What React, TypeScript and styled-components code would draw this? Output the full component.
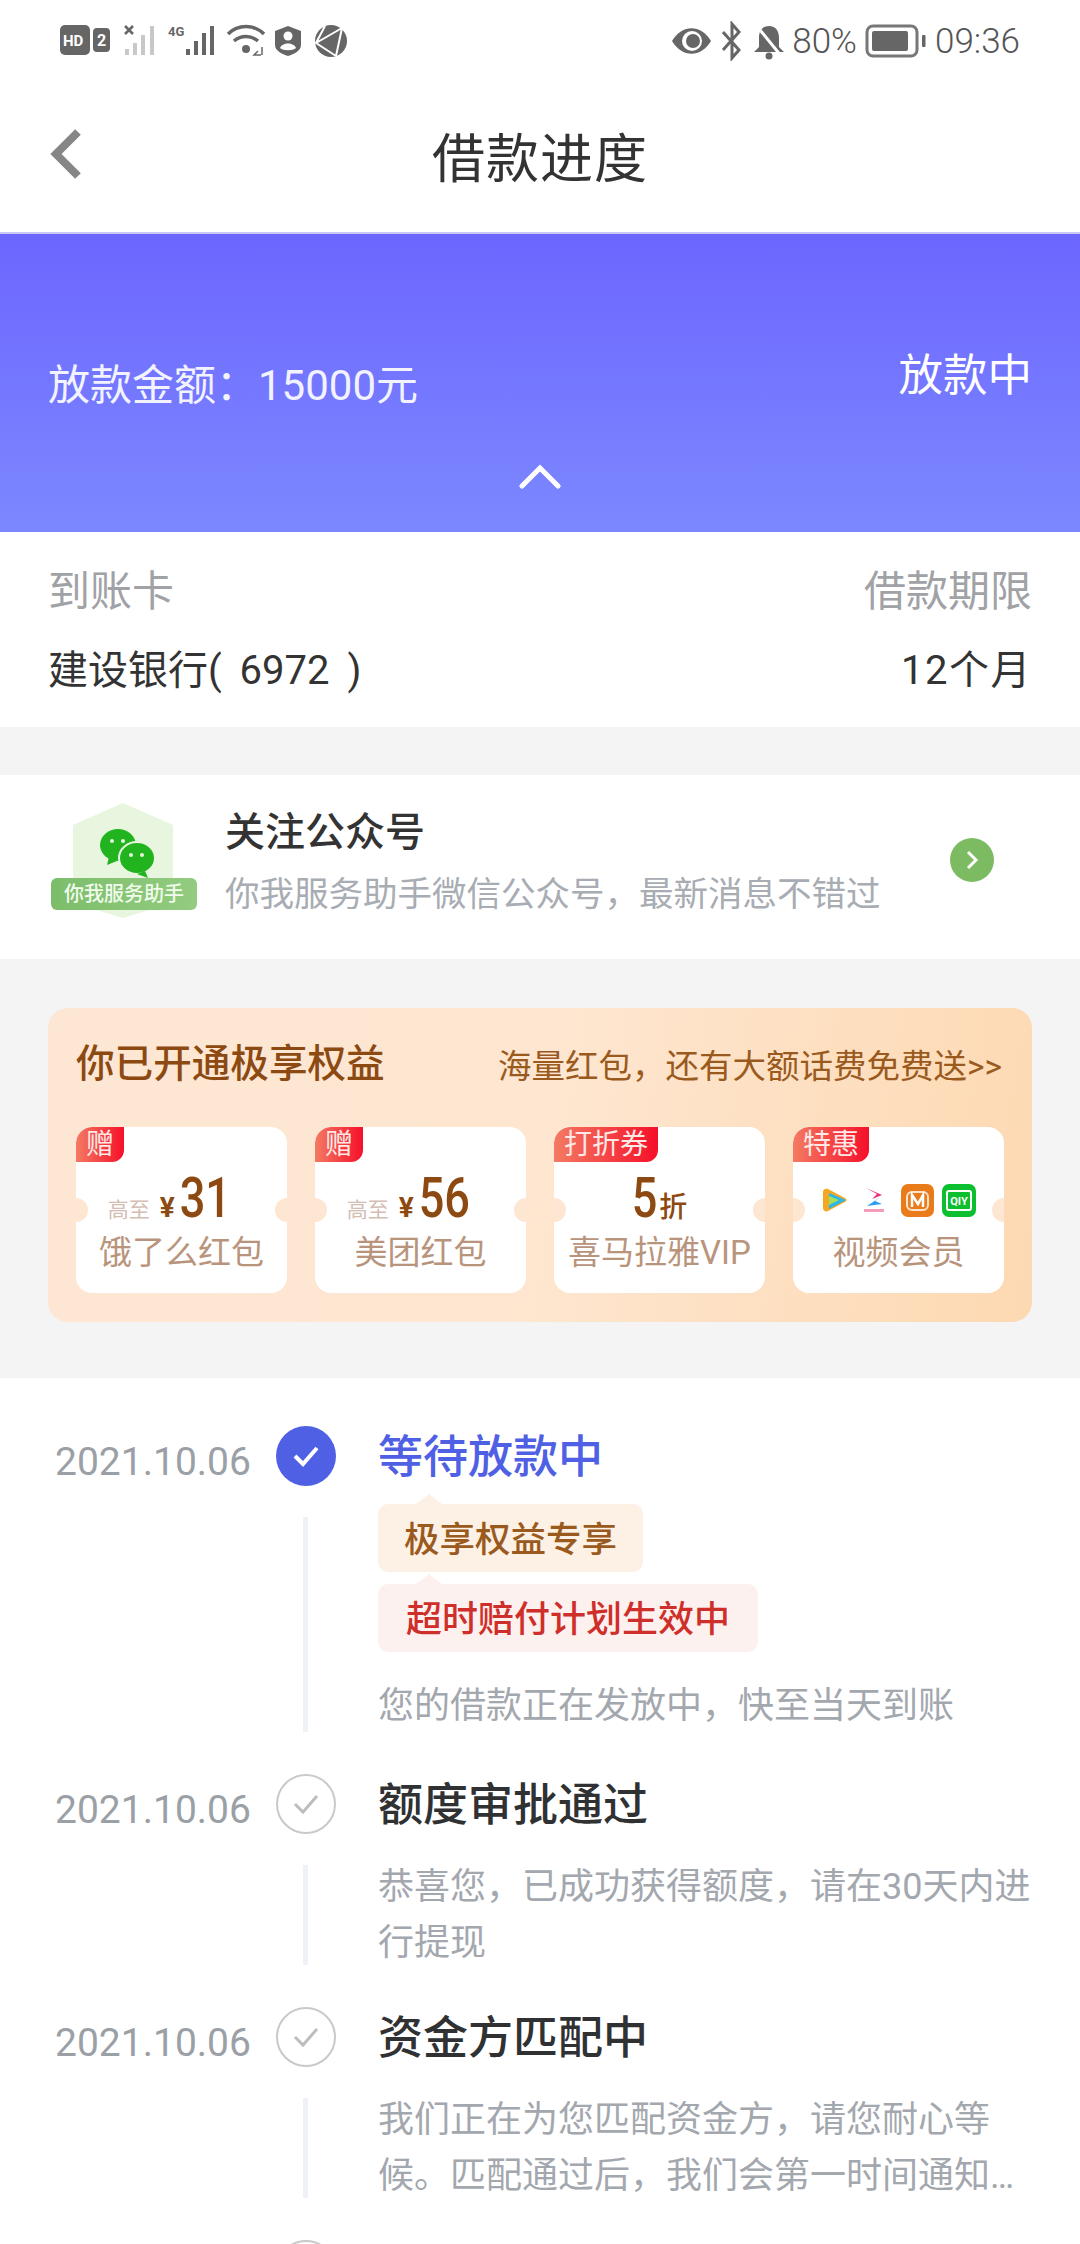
import React from 'react';
import styled, { createGlobalStyle } from 'styled-components';

const FONT = `'Roboto', 'Noto Sans CJK SC', sans-serif`;

const GlobalStyle = createGlobalStyle`
  html, body {
    margin: 0;
    padding: 0;
    background: #fff;
  }

  * {
    box-sizing: border-box;
  }
`;

const Page = styled.div`
  width: 1080px;
  height: 2244px;
  overflow: hidden;
  background: #fff;
  font-family: ${FONT};
`;

const StatusBar = styled.div`
  height: 82px;
  padding: 0 60px;
  display: flex;
  align-items: center;
  justify-content: space-between;
`;

const StatusGroup = styled.div`
  display: flex;
  align-items: center;
  gap: 8px;
`;

const StatusText = styled.span`
  font-size: 35px;
  font-weight: 300;
  color: #555;
`;

const NavBar = styled.div`
  height: 150px;
  position: relative;
  display: flex;
  align-items: center;
  justify-content: center;
  padding-top: 6px;
`;

const BackIcon = styled.svg`
  position: absolute;
  left: 48px;
  top: 45px;
`;

const NavTitle = styled.div`
  font-size: 53px;
  line-height: 60px;
  color: #333;
  letter-spacing: 1px;
`;

const Hero = styled.div`
  height: 300px;
  position: relative;
  padding: 112px 48px 0;
  display: flex;
  justify-content: space-between;
  color: #fff;
  background: linear-gradient(180deg, #6c66ff 0%, #7c88ff 100%);
  border-top: 2px solid #c9c8f5;
`;

const Amount = styled.div`
  font-size: 42px;
  line-height: 60px;
  margin-top: 10px;
  color: #f2f3ff;
`;

const HeroStatus = styled.div`
  font-size: 44.5px;
  line-height: 60px;
`;

const HeroChevron = styled.svg`
  position: absolute;
  left: 518px;
  bottom: 43px;
`;

const InfoBlock = styled.div`
  height: 195px;
  padding: 15px 48px 0;
`;

const InfoRow = styled.div<{ $muted?: boolean }>`
  display: flex;
  justify-content: space-between;
  align-items: center;
  height: 80px;
  font-size: ${(p) => (p.$muted ? '42px' : '40px')};
  word-spacing: ${(p) => (p.$muted ? '0' : '8px')};
  color: ${(p) => (p.$muted ? '#a0a2a6' : '#333')};

  & span:last-child {
    letter-spacing: ${(p) => (p.$muted ? '0' : '1.5px')};
  }
`;

const Gap = styled.div<{ $h: number }>`
  height: ${(p) => p.$h}px;
  background: #f4f4f4;
`;

const Follow = styled.div`
  height: 184px;
  padding: 0 86px 0 51px;
  display: flex;
  align-items: center;
`;

const Badge = styled.div`
  width: 148px;
  height: 118px;
  margin-top: -10px;
  position: relative;
  flex-shrink: 0;
`;

const BadgeHex = styled.svg`
  position: absolute;
  left: 0;
  top: 0;
`;

const BadgeLabel = styled.div`
  position: absolute;
  left: 0;
  top: 75px;
  width: 146px;
  height: 32px;
  border-radius: 6px;
  background: linear-gradient(90deg, #7cbd6a, #93cc80);
  color: #f1fbec;
  font-size: 20px;
  line-height: 32px;
  text-align: center;
  font-weight: 500;
`;

const FollowText = styled.div`
  flex: 1;
  margin-left: 26px;
  margin-top: -8px;
`;

const FollowTitle = styled.div`
  font-size: 40px;
  line-height: 48px;
  color: #333;
  font-weight: 500;
  margin-bottom: 14px;
`;

const FollowSub = styled.div`
  font-size: 34.5px;
  line-height: 46px;
  color: #a8acb3;
`;

const GoButton = styled.div`
  width: 44px;
  height: 44px;
  margin-top: -14px;
  border-radius: 50%;
  background: #7dbb63;
  display: flex;
  align-items: center;
  justify-content: center;
`;

const Benefits = styled.div`
  height: 419px;
  background: #f4f4f4;
  padding: 49px 48px 0;
`;

const BenefitCard = styled.div`
  height: 314px;
  border-radius: 20px;
  padding: 28px 28px 0;
  background: linear-gradient(100deg, #fde7d4 0%, #fee6d0 50%, #fdd9b2 100%);
`;

const BenefitHead = styled.div`
  display: flex;
  justify-content: space-between;
  align-items: center;
  height: 56px;
  color: #8c4a12;
`;

const BenefitTitle = styled.div`
  font-size: 38.6px;
  font-weight: 500;
  margin-bottom: 8px;
`;

const BenefitHint = styled.div`
  font-size: 33.5px;
  margin: 0 2px 2px 0;
  color: #9a5a1e;
`;

const Coupons = styled.div`
  display: flex;
  justify-content: space-between;
  margin-top: 35px;
`;

const Coupon = styled.div`
  width: 211px;
  height: 166px;
  border-radius: 16px;
  background: #fff;
  position: relative;
  overflow: hidden;
  display: flex;
  flex-direction: column;
  align-items: center;
  justify-content: flex-end;
  padding-bottom: 18px;

  &::before,
  &::after {
    content: '';
    position: absolute;
    top: 71px;
    width: 24px;
    height: 24px;
    border-radius: 50%;
    background: #fde6d2;
  }

  &::before {
    left: -12px;
  }

  &::after {
    right: -12px;
  }
`;

const CouponTag = styled.div`
  position: absolute;
  left: 0;
  top: 0;
  height: 35px;
  padding: 0 10px;
  color: #ffe9e6;
  font-size: 28px;
  line-height: 35px;
  border-radius: 16px 0 12px 0;
  background: linear-gradient(90deg, #f47a62, #f5102a);
`;

const CouponValue = styled.div<{ $shift?: number }>`
  display: flex;
  align-items: baseline;
  justify-content: center;
  height: 54px;
  padding-right: ${(p) => p.$shift ?? 0}px;
  color: #8c4a12;
`;

const CouponUpTo = styled.span`
  font-size: 21px;
  color: #d4bdb2;
  margin-right: 10px;
`;

const CouponYen = styled.span`
  font-size: 28px;
  font-weight: 700;
  margin-right: 5px;
`;

const CouponNumber = styled.span<{ $digits: number }>`
  display: inline-block;
  font-size: 55px;
  font-weight: 500;
  line-height: 54px;
  transform: scaleX(0.82);
  margin: 0 ${(p) => p.$digits * -2.8}px;
`;

const CouponUnit = styled.span`
  font-size: 28px;
  font-weight: 500;
  margin-left: 2px;
`;

const CouponName = styled.div`
  font-size: 33px;
  line-height: 44px;
  color: #b9947c;
  margin-top: 6px;
  white-space: nowrap;
`;

const Brands = styled.div`
  display: flex;
  align-items: center;
  justify-content: center;
  gap: 16px;
  height: 34px;
  margin-bottom: 8px;

  & svg:last-child {
    margin-left: -8px;
  }
`;

const Timeline = styled.div`
  padding: 48px 40px 0 55px;
`;

const Step = styled.div`
  display: grid;
  grid-template-columns: 221px 60px 1fr;
`;

const StepDate = styled.div`
  font-size: 39px;
  line-height: 60px;
  color: #9b9fa6;
  padding-top: 6px;
`;

const Rail = styled.div`
  display: flex;
  flex-direction: column;
  align-items: center;
  padding-bottom: 42px;
`;

const Dot = styled.div<{ $active?: boolean }>`
  width: 60px;
  height: 60px;
  border-radius: 50%;
  flex-shrink: 0;
  display: flex;
  align-items: center;
  justify-content: center;
  background: ${(p) => (p.$active ? '#4f60e4' : '#fff')};
  border: ${(p) => (p.$active ? 'none' : '2px solid #c9c9c9')};
`;

const RailLine = styled.div<{ $h: number }>`
  width: 5px;
  height: ${(p) => p.$h}px;
  margin-top: 31px;
  margin-left: -1px;
  background: #eef2f7;
`;

const StepBody = styled.div`
  padding-left: 42px;
  margin-top: 2px;
  min-width: 0;
`;

const StepTitle = styled.div<{ $active?: boolean }>`
  font-size: 45px;
  line-height: 60px;
  color: ${(p) => (p.$active ? '#4f60e4' : '#303133')};
  font-weight: 500;
`;

const Pill = styled.div<{ $red?: boolean }>`
  width: fit-content;
  position: relative;
  height: 68px;
  margin-top: ${(p) => (p.$red ? '12px' : '16px')};
  padding: 0 ${(p) => (p.$red ? '28px' : '26px')};
  border-radius: 10px;
  font-size: ${(p) => (p.$red ? '36px' : '35.5px')};
  line-height: 72px;
  font-weight: 500;
  color: ${(p) => (p.$red ? '#cf2f2a' : '#9a5a1e')};
  background: ${(p) => (p.$red ? '#fdf1ef' : '#fdf0e4')};

  &::before {
    content: '';
    position: absolute;
    left: 38px;
    top: -10px;
    border-left: 13px solid transparent;
    border-right: 13px solid transparent;
    border-bottom: 10px solid ${(p) => (p.$red ? '#fdf1ef' : '#fdf0e4')};
  }
`;

const StepDesc = styled.div<{ $top: number }>`
  margin-top: ${(p) => p.$top}px;
  font-size: 36px;
  line-height: 56px;
  color: #a3a7ae;
`;

const Clamp = styled(StepDesc)`
  display: -webkit-box;
  -webkit-box-orient: vertical;
  -webkit-line-clamp: 2;
  overflow: hidden;
`;

const Check = ({ color, width }: { color: string; width: number }) => (
  <svg width="28" height="24" viewBox="0 0 28 24" fill="none">
    <path d="M3 12l8 8L25 4" stroke={color} strokeWidth={width} />
  </svg>
);

const App = () => (
  <Page>
    <GlobalStyle />
    <StatusBar>
      <StatusGroup>
        <svg width="290" height="40" viewBox="0 0 290 40">
          <rect x="0" y="4" width="30" height="30" rx="5" fill="#666" />
          <text x="3" y="25" fontSize="15" fontWeight="700" fill="#fff" fontFamily="Roboto">HD</text>
          <rect x="33" y="7" width="17" height="24" rx="4" fill="#666" />
          <text x="37" y="25" fontSize="16" fontWeight="700" fill="#fff" fontFamily="Roboto">2</text>
          <path d="M65 5l8 8M73 5l-8 8" stroke="#666" strokeWidth="2.5" />
          <g fill="#c8c8c8">
            <rect x="65" y="28" width="4" height="6" />
            <rect x="73" y="22" width="4" height="12" />
            <rect x="81" y="14" width="4" height="20" />
            <rect x="90" y="5" width="4" height="29" />
          </g>
          <text x="108" y="15" fontSize="13" fontWeight="700" fill="#666" fontFamily="Roboto">4G</text>
          <g fill="#666">
            <rect x="126" y="28" width="4" height="6" />
            <rect x="134" y="20" width="4" height="14" />
            <rect x="142" y="12" width="4" height="22" />
            <rect x="150" y="5" width="4" height="29" />
          </g>
          <g fill="none" stroke="#666" strokeWidth="3.5">
            <path d="M168 13c10-10 26-10 36 0" />
            <path d="M174 20c7-6 17-6 24 0" />
          </g>
          <circle cx="186" cy="28" r="4" fill="#666" />
          <path d="M198 30l-4 4h7M202 26v8" stroke="#666" strokeWidth="1.5" fill="none" />
          <path d="M215 10l13-5 13 5v14c0 6-7 9-13 11-6-2-13-5-13-11z" fill="#666" />
          <circle cx="228" cy="15" r="4.5" fill="#fff" />
          <path d="M220 27c2-6 14-6 16 0-3 3-13 3-16 0z" fill="#fff" />
          <circle cx="271" cy="20" r="16" fill="#666" />
          <path d="M265 5l-9 17 20 13M256 22l26-15M276 35l6-28" stroke="#fff" strokeWidth="2" fill="none" />
        </svg>
      </StatusGroup>
      <StatusGroup>
        <svg width="112" height="40" viewBox="0 0 112 40">
          <path d="M0 20c10-17 29-17 39 0-10 17-29 17-39 0z" fill="#666" />
          <circle cx="20" cy="20" r="10" fill="#fff" />
          <circle cx="21" cy="20" r="7" fill="#666" />
          <path d="M51 11l16 18-7 8V3l7 8-16 18" stroke="#666" strokeWidth="3" fill="none" />
          <path d="M97 5c7 0 10 5 10 12v9l5 5H82l5-5v-9c0-7 3-12 10-12z" fill="#666" />
          <circle cx="97" cy="35" r="3.5" fill="#666" />
          <path d="M84 4l26 32" stroke="#fff" strokeWidth="3" />
        </svg>
        <StatusText>80%</StatusText>
        <svg width="62" height="34" viewBox="0 0 62 34" fill="none">
          <rect x="2" y="2" width="50" height="30" rx="6" stroke="#777" strokeWidth="3" />
          <rect x="7" y="7" width="36" height="20" rx="2" fill="#666" />
          <rect x="57" y="11" width="3.5" height="12" rx="1" fill="#666" />
        </svg>
        <StatusText>09:36</StatusText>
      </StatusGroup>
    </StatusBar>

    <NavBar>
      <BackIcon width="36" height="54" viewBox="0 0 36 54" fill="none">
        <path d="M30 5L8 27l22 22" stroke="#868686" strokeWidth="8" />
      </BackIcon>
      <NavTitle>借款进度</NavTitle>
    </NavBar>

    <Hero>
      <Amount>放款金额：15000元</Amount>
      <HeroStatus>放款中</HeroStatus>
      <HeroChevron width="44" height="26" viewBox="0 0 44 26" fill="none">
        <path d="M4 23L22 5l18 18" stroke="#fff" strokeWidth="5" strokeLinecap="round" />
      </HeroChevron>
    </Hero>

    <InfoBlock>
      <InfoRow $muted>
        <span>到账卡</span>
        <span>借款期限</span>
      </InfoRow>
      <InfoRow>
        <span>建设银行( 6972 )</span>
        <span>12个月</span>
      </InfoRow>
    </InfoBlock>

    <Gap $h={48} />

    <Follow>
      <Badge>
        <BadgeHex width="148" height="118" viewBox="0 0 148 118">
          <path d="M72 0l50 22v78l-50 15-50-15V22z" fill="#e8f6df" />
          <ellipse cx="67" cy="42" rx="18" ry="16" fill="#22b41f" />
          <path d="M58 54l-2 8 10-4z" fill="#22b41f" />
          <ellipse cx="86" cy="55" rx="18" ry="16" fill="#22b41f" stroke="#e8f6df" strokeWidth="2" />
          <path d="M94 68l3 7-11-4z" fill="#22b41f" />
          <circle cx="61" cy="38" r="2" fill="#e8f6df" />
          <circle cx="72" cy="38" r="2" fill="#e8f6df" />
          <circle cx="80" cy="52" r="2" fill="#e8f6df" />
          <circle cx="91" cy="52" r="2" fill="#e8f6df" />
        </BadgeHex>
        <BadgeLabel>你我服务助手</BadgeLabel>
      </Badge>
      <FollowText>
        <FollowTitle>关注公众号</FollowTitle>
        <FollowSub>你我服务助手微信公众号，最新消息不错过</FollowSub>
      </FollowText>
      <GoButton>
        <svg width="14" height="22" viewBox="0 0 14 22" fill="none">
          <path d="M3 3l8 8-8 8" stroke="#fff" strokeWidth="3" />
        </svg>
      </GoButton>
    </Follow>

    <Benefits>
      <BenefitCard>
        <BenefitHead>
          <BenefitTitle>你已开通极享权益</BenefitTitle>
          <BenefitHint>海量红包，还有大额话费免费送&gt;&gt;</BenefitHint>
        </BenefitHead>
        <Coupons>
          <Coupon>
            <CouponTag>赠</CouponTag>
            <CouponValue $shift={24}>
              <CouponUpTo>高至</CouponUpTo>
              <CouponYen>¥</CouponYen>
              <CouponNumber $digits={2}>31</CouponNumber>
            </CouponValue>
            <CouponName>饿了么红包</CouponName>
          </Coupon>
          <Coupon>
            <CouponTag>赠</CouponTag>
            <CouponValue $shift={24}>
              <CouponUpTo>高至</CouponUpTo>
              <CouponYen>¥</CouponYen>
              <CouponNumber $digits={2}>56</CouponNumber>
            </CouponValue>
            <CouponName>美团红包</CouponName>
          </Coupon>
          <Coupon>
            <CouponTag>打折券</CouponTag>
            <CouponValue>
              <CouponNumber $digits={1}>5</CouponNumber>
              <CouponUnit>折</CouponUnit>
            </CouponValue>
            <CouponName>喜马拉雅VIP</CouponName>
          </Coupon>
          <Coupon>
            <CouponTag>特惠</CouponTag>
            <Brands>
              <svg width="25" height="24" viewBox="0 0 25 24">
                <path d="M1 4c0-3 3-4 5-3l17 9c2 1 2 3 0 4L6 23c-2 1-5 0-5-3z" fill="#f5a623" />
                <path d="M7 5l17 7-17 9z" fill="#2bb8e8" />
                <path d="M7 8l10 4-10 5z" fill="#a5e05a" />
              </svg>
              <svg width="22" height="26" viewBox="0 0 22 26">
                <path d="M3 1l16 7-10 4 5-5z" fill="#ee2c78" />
                <path d="M19 9L4 19l15-2-7-3z" fill="#2a9df4" />
                <rect x="1" y="22" width="20" height="3" fill="#ee5a8a" opacity="0.6" />
              </svg>
              <svg width="33" height="33" viewBox="0 0 33 33">
                <rect width="33" height="33" rx="7" fill="#ea7b1a" />
                <rect x="6" y="8" width="21" height="18" rx="5" fill="none" stroke="#fbe3cc" strokeWidth="2" />
                <path d="M11 23V11l6 9 5-9v12" fill="none" stroke="#fff" strokeWidth="2.5" />
              </svg>
              <svg width="34" height="33" viewBox="0 0 34 33">
                <rect width="34" height="33" rx="7" fill="#0bbf2e" />
                <rect x="5" y="7" width="24" height="19" rx="2" fill="none" stroke="#fff" strokeWidth="2" />
                <text x="17" y="21" fontSize="11" fontWeight="700" textAnchor="middle" fill="#fff" fontFamily="Roboto">QIY</text>
              </svg>
            </Brands>
            <CouponName>视频会员</CouponName>
          </Coupon>
        </Coupons>
      </BenefitCard>
    </Benefits>

    <Timeline>
      <Step>
        <StepDate>2021.10.06</StepDate>
        <Rail>
          <Dot $active>
            <Check color="#fff" width={4} />
          </Dot>
          <RailLine $h={215} />
        </Rail>
        <StepBody>
          <StepTitle $active>等待放款中</StepTitle>
          <Pill>极享权益专享</Pill>
          <Pill $red>超时赔付计划生效中</Pill>
          <StepDesc $top={26}>您的借款正在发放中，快至当天到账</StepDesc>
        </StepBody>
      </Step>
      <Step>
        <StepDate>2021.10.06</StepDate>
        <Rail>
          <Dot>
            <Check color="#bdbdbd" width={3} />
          </Dot>
          <RailLine $h={100} />
        </Rail>
        <StepBody>
          <StepTitle>额度审批通过</StepTitle>
          <StepDesc $top={23}>恭喜您，已成功获得额度，请在30天内进行提现</StepDesc>
        </StepBody>
      </Step>
      <Step>
        <StepDate>2021.10.06</StepDate>
        <Rail>
          <Dot>
            <Check color="#bdbdbd" width={3} />
          </Dot>
          <RailLine $h={100} />
        </Rail>
        <StepBody>
          <StepTitle>资金方匹配中</StepTitle>
          <Clamp $top={23}>我们正在为您匹配资金方，请您耐心等候。匹配通过后，我们会第一时间通知您，请留意消息</Clamp>
        </StepBody>
      </Step>
      <Step>
        <span />
        <Rail>
          <Dot />
        </Rail>
      </Step>
    </Timeline>
  </Page>
);

export default App;
